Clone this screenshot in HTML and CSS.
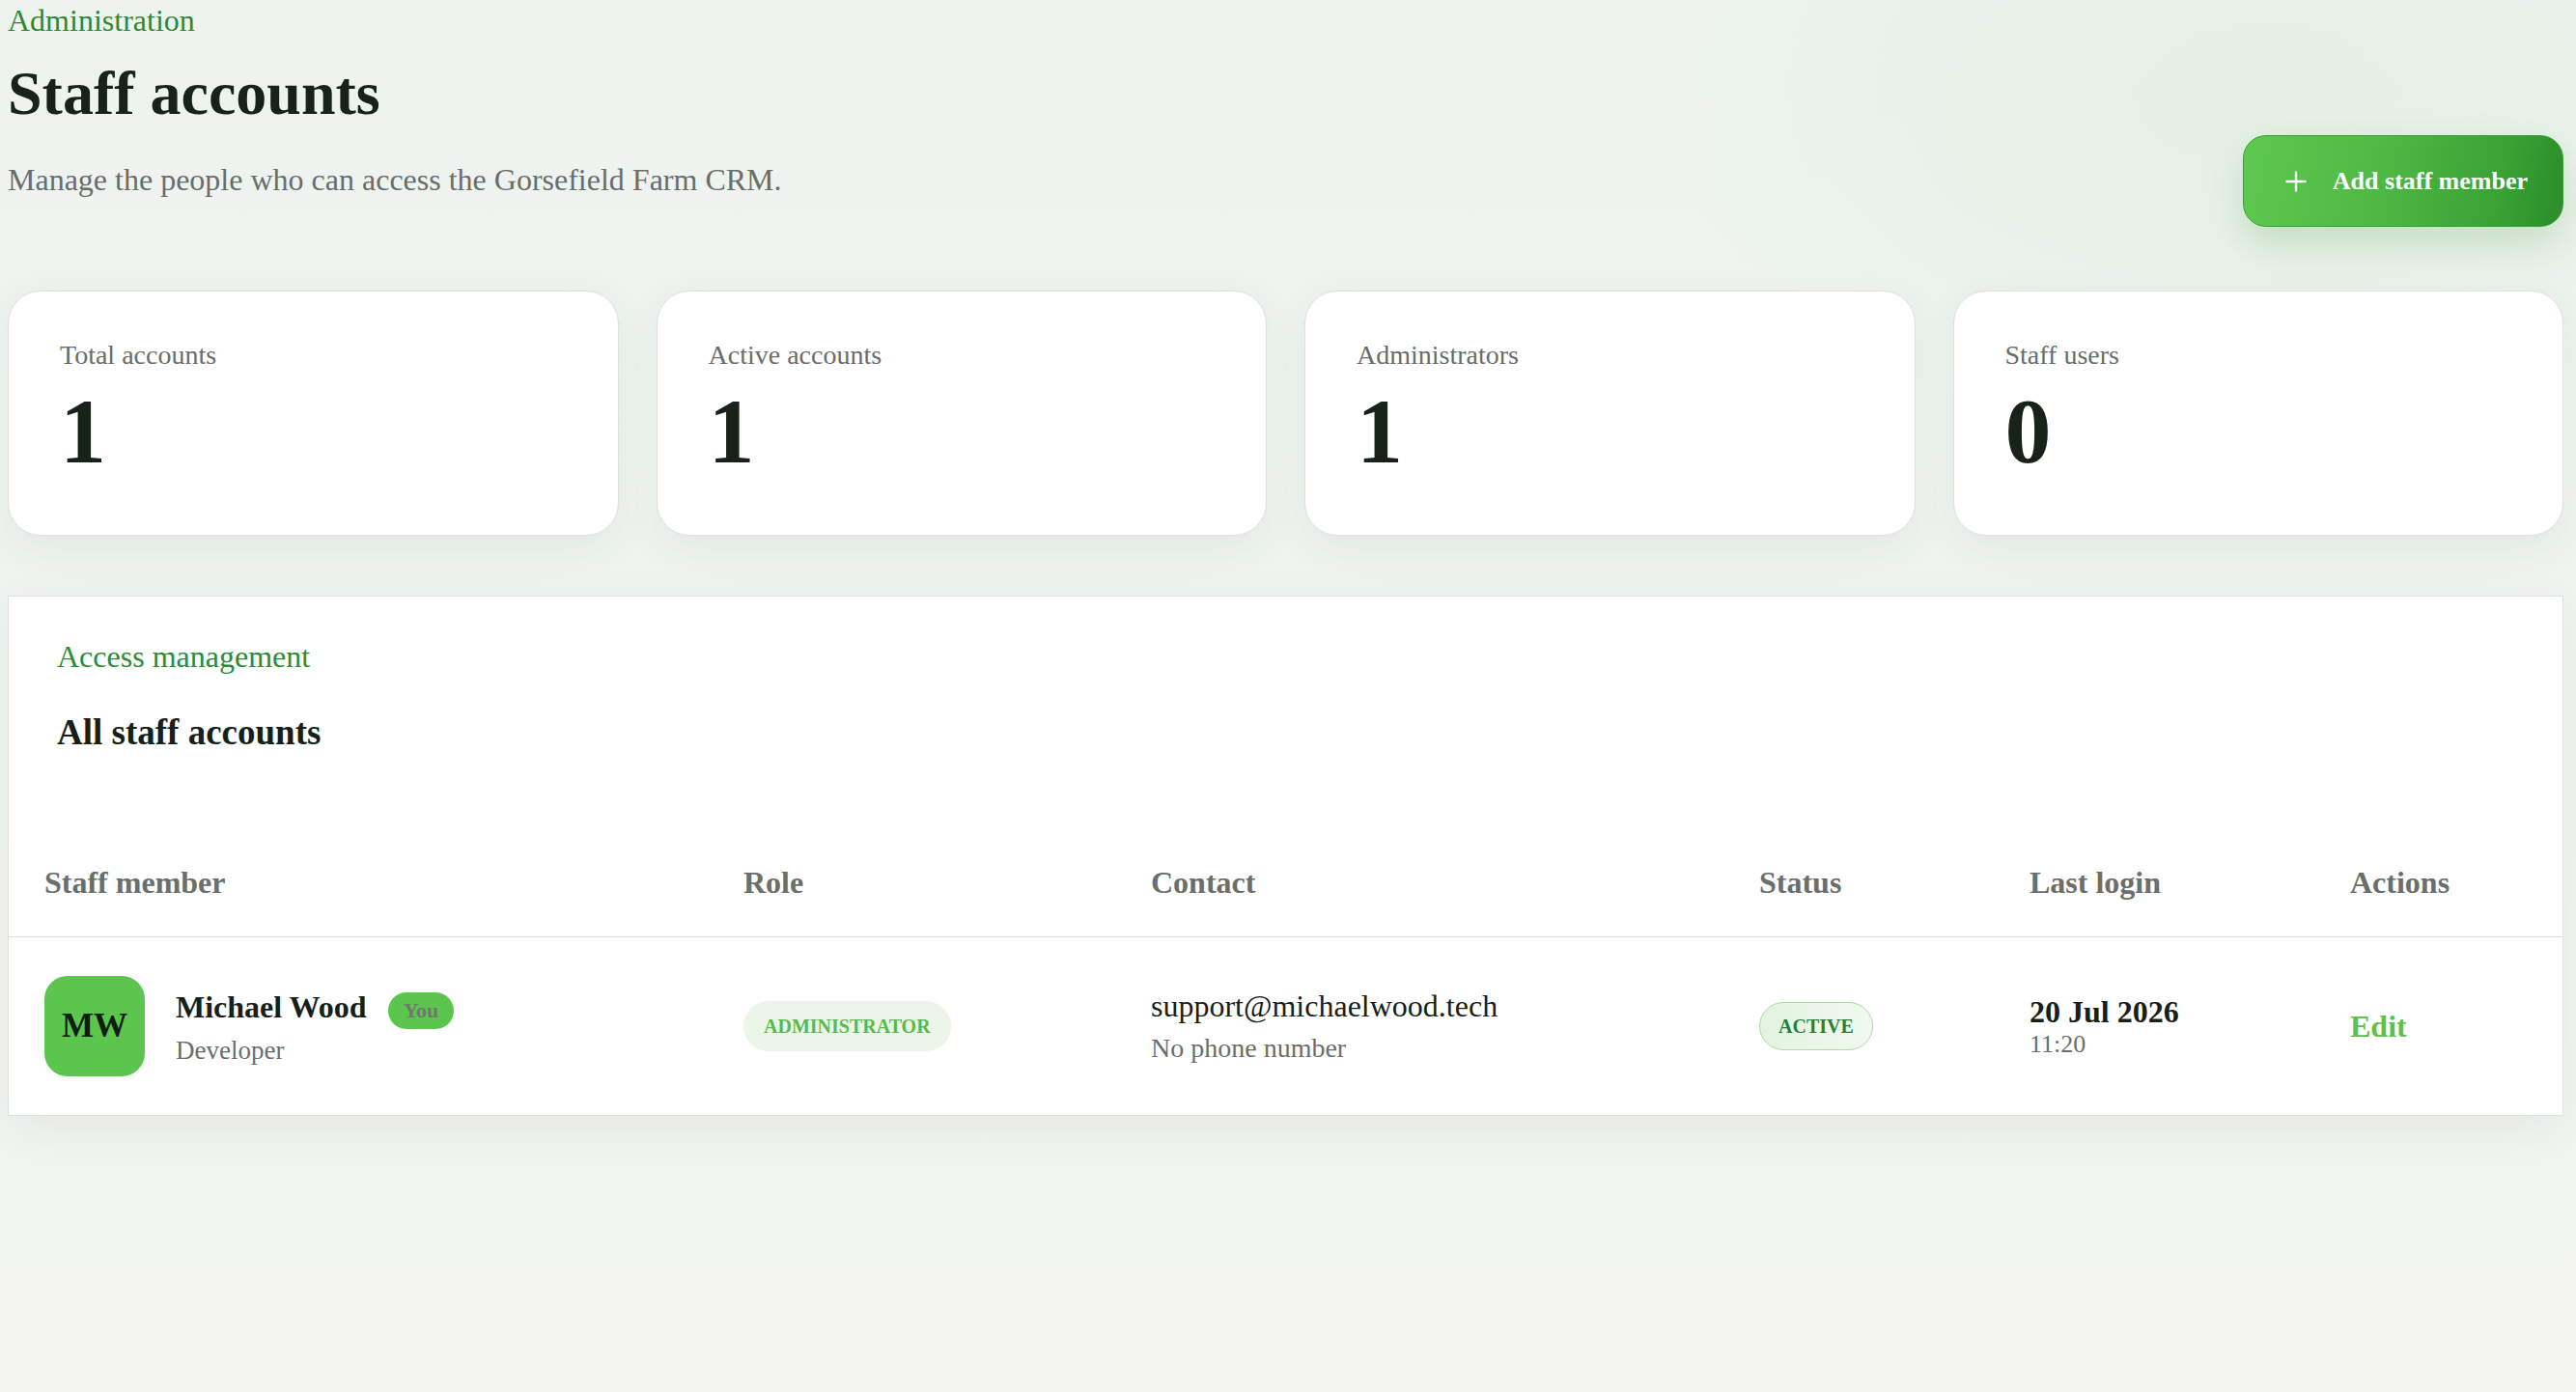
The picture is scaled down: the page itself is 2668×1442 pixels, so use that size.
FILE: index.html
```html
<!DOCTYPE html>
<html lang="en">
<head>
<meta charset="utf-8">
<title>Staff accounts</title>
<link rel="stylesheet" href="styles.css">
</head>
<body>
<main class="page">
  <header class="page-head">
    <div class="page-head-text">
      <div class="eyebrow">Administration</div>
      <h1 class="page-title">Staff accounts</h1>
      <p class="page-sub">Manage the people who can access the Gorsefield Farm CRM.</p>
    </div>
    <button class="add-btn" type="button">
      <svg class="add-icon" width="24" height="24" viewBox="0 0 24 24" aria-hidden="true">
        <path d="M12 2.5V21.5M2.5 12H21.5" fill="none" stroke="#ffffff" stroke-width="2.4" stroke-linecap="round"/>
      </svg>
      <span>Add staff member</span>
    </button>
  </header>

  <section class="stats">
    <div class="stat-card">
      <div class="stat-label">Total accounts</div>
      <div class="stat-value">1</div>
    </div>
    <div class="stat-card">
      <div class="stat-label">Active accounts</div>
      <div class="stat-value">1</div>
    </div>
    <div class="stat-card">
      <div class="stat-label">Administrators</div>
      <div class="stat-value">1</div>
    </div>
    <div class="stat-card">
      <div class="stat-label">Staff users</div>
      <div class="stat-value">0</div>
    </div>
  </section>

  <section class="panel">
    <div class="panel-head">
      <div class="panel-eyebrow">Access management</div>
      <h2 class="panel-title">All staff accounts</h2>
    </div>
    <table class="staff-table">
      <colgroup>
        <col class="c-member">
        <col class="c-role">
        <col class="c-contact">
        <col class="c-status">
        <col class="c-login">
        <col class="c-actions">
      </colgroup>
      <thead>
        <tr>
          <th>Staff member</th>
          <th>Role</th>
          <th>Contact</th>
          <th>Status</th>
          <th>Last login</th>
          <th>Actions</th>
        </tr>
      </thead>
      <tbody>
        <tr>
          <td>
            <div class="member">
              <div class="avatar">MW</div>
              <div class="member-text">
                <div class="member-name">Michael Wood<span class="you-badge">You</span></div>
                <div class="member-title">Developer</div>
              </div>
            </div>
          </td>
          <td><span class="role-badge">Administrator</span></td>
          <td>
            <div class="contact-email">support@michaelwood.tech</div>
            <div class="contact-phone">No phone number</div>
          </td>
          <td><span class="status-badge">Active</span></td>
          <td>
            <div class="login-date">20 Jul 2026</div>
            <div class="login-time">11:20</div>
          </td>
          <td><a class="edit-link" href="#">Edit</a></td>
        </tr>
      </tbody>
    </table>
  </section>
</main>
</body>
</html>
```

FILE: styles.css
```css
* {
  box-sizing: border-box;
}

html, body {
  margin: 0;
  min-height: 100%;
}

body {
  font-family: "Liberation Serif", "Times New Roman", Times, serif;
  color: #1a231c;
  background:
    radial-gradient(ellipse 900px 500px at 88% 8%, rgba(110, 190, 100, 0.08), transparent 70%),
    linear-gradient(180deg, #eef3ef 0%, #f1f5f1 55%, #f4f5f2 100%);
  min-height: 1442px;
}

.page {
  padding: 3px 13px 40px 8px;
}

/* Header */
.page-head {
  display: flex;
  justify-content: space-between;
  align-items: flex-start;
}

.eyebrow {
  font-size: 32px;
  line-height: 37px;
  color: #2d8a32;
}

.page-title {
  margin: 20px 0 0;
  font-size: 64px;
  line-height: 74px;
  font-weight: 700;
  color: #18221a;
}

.page-sub {
  margin: 34px 0 0;
  font-size: 32px;
  line-height: 37px;
  color: #6a6e6b;
}

.add-btn {
  margin-top: 137px;
  height: 95px;
  display: flex;
  align-items: center;
  gap: 26px;
  padding: 0 36px 0 42px;
  border: 1px solid #3a9f37;
  border-radius: 24px;
  background: linear-gradient(100deg, #5dc94f 0%, #4fba45 40%, #38a234 80%, #2c8c2a 100%);
  color: #ffffff;
  font-family: inherit;
  font-size: 26px;
  font-weight: 700;
  box-shadow: 0 18px 40px rgba(70, 160, 60, 0.22);
  cursor: pointer;
}

.add-icon {
  display: block;
  flex: none;
}

/* Stats */
.stats {
  margin-top: 66px;
  display: grid;
  grid-template-columns: repeat(4, 1fr);
  gap: 39px;
}

.stat-card {
  background: #ffffff;
  border: 1px solid #dce2de;
  border-radius: 34px;
  padding: 50px 53px 52px;
  box-shadow: 0 14px 44px rgba(40, 70, 50, 0.07);
}

.stat-label {
  font-size: 28px;
  line-height: 32px;
  color: #696d6a;
}

.stat-value {
  margin-top: 8px;
  font-size: 96px;
  line-height: 110px;
  font-weight: 700;
  color: #172219;
}

/* Panel */
.panel {
  margin-top: 62px;
  background: #ffffff;
  border: 1px solid #dce2de;
  box-shadow: 0 16px 50px rgba(40, 70, 50, 0.07);
}

.panel-head {
  padding: 44px 50px 79px;
}

.panel-eyebrow {
  font-size: 32px;
  line-height: 37px;
  color: #2d8a35;
}

.panel-title {
  margin: 39px 0 0;
  font-size: 37px;
  line-height: 42px;
  font-weight: 700;
  color: #171f19;
}

.staff-table {
  width: 100%;
  border-collapse: collapse;
  table-layout: fixed;
}

.c-member { width: 724px; }
.c-role { width: 422px; }
.c-contact { width: 630px; }
.c-status { width: 280px; }
.c-login { width: 332px; }
.c-actions { width: auto; }

.staff-table th {
  text-align: left;
  padding: 37px 37px;
  font-size: 32px;
  line-height: 37px;
  font-weight: 700;
  color: #6a6f6b;
  border-bottom: 1px solid #d9dfdb;
}

.staff-table td {
  padding: 40px 37px;
  vertical-align: middle;
}

.member {
  display: flex;
  align-items: center;
  gap: 32px;
}

.avatar {
  flex: none;
  width: 104px;
  height: 104px;
  border-radius: 24px;
  background: #5cc54e;
  color: #0f1e10;
  font-size: 35px;
  font-weight: 700;
  display: flex;
  align-items: center;
  justify-content: center;
}

.member-name {
  font-size: 32px;
  line-height: 43px;
  font-weight: 700;
  color: #171f19;
}

.you-badge {
  display: inline-block;
  margin-left: 22px;
  padding: 7px 16px;
  font-size: 22px;
  line-height: 24px;
  font-weight: 700;
  color: #6d7a6c;
  background: #5cc54e;
  border-radius: 999px;
}

.member-title {
  margin-top: 7px;
  font-size: 27px;
  line-height: 31px;
  color: #6a6e6b;
}

.role-badge {
  display: inline-block;
  padding: 14px 21px;
  font-size: 20px;
  line-height: 24px;
  font-weight: 700;
  text-transform: uppercase;
  color: #5ab94d;
  background: #ebf6e8;
  border-radius: 999px;
}

.contact-email {
  font-size: 32px;
  line-height: 37px;
  color: #181e1a;
}

.contact-phone {
  margin-top: 9px;
  font-size: 28px;
  line-height: 32px;
  color: #6a6e6b;
}

.status-badge {
  display: inline-block;
  padding: 12px 19px;
  font-size: 20px;
  line-height: 24px;
  font-weight: 700;
  text-transform: uppercase;
  color: #22803a;
  background: linear-gradient(90deg, #e3f3e0, #f1f9ef);
  border: 1.5px solid #acd9a5;
  border-radius: 999px;
}

.login-date {
  font-size: 32px;
  line-height: 37px;
  font-weight: 700;
  color: #171f19;
}

.login-time {
  margin-top: 0;
  font-size: 26px;
  line-height: 30px;
  color: #6a6e6b;
}

.edit-link {
  font-size: 32px;
  line-height: 37px;
  font-weight: 700;
  color: #5cc14e;
  text-decoration: none;
}
```
